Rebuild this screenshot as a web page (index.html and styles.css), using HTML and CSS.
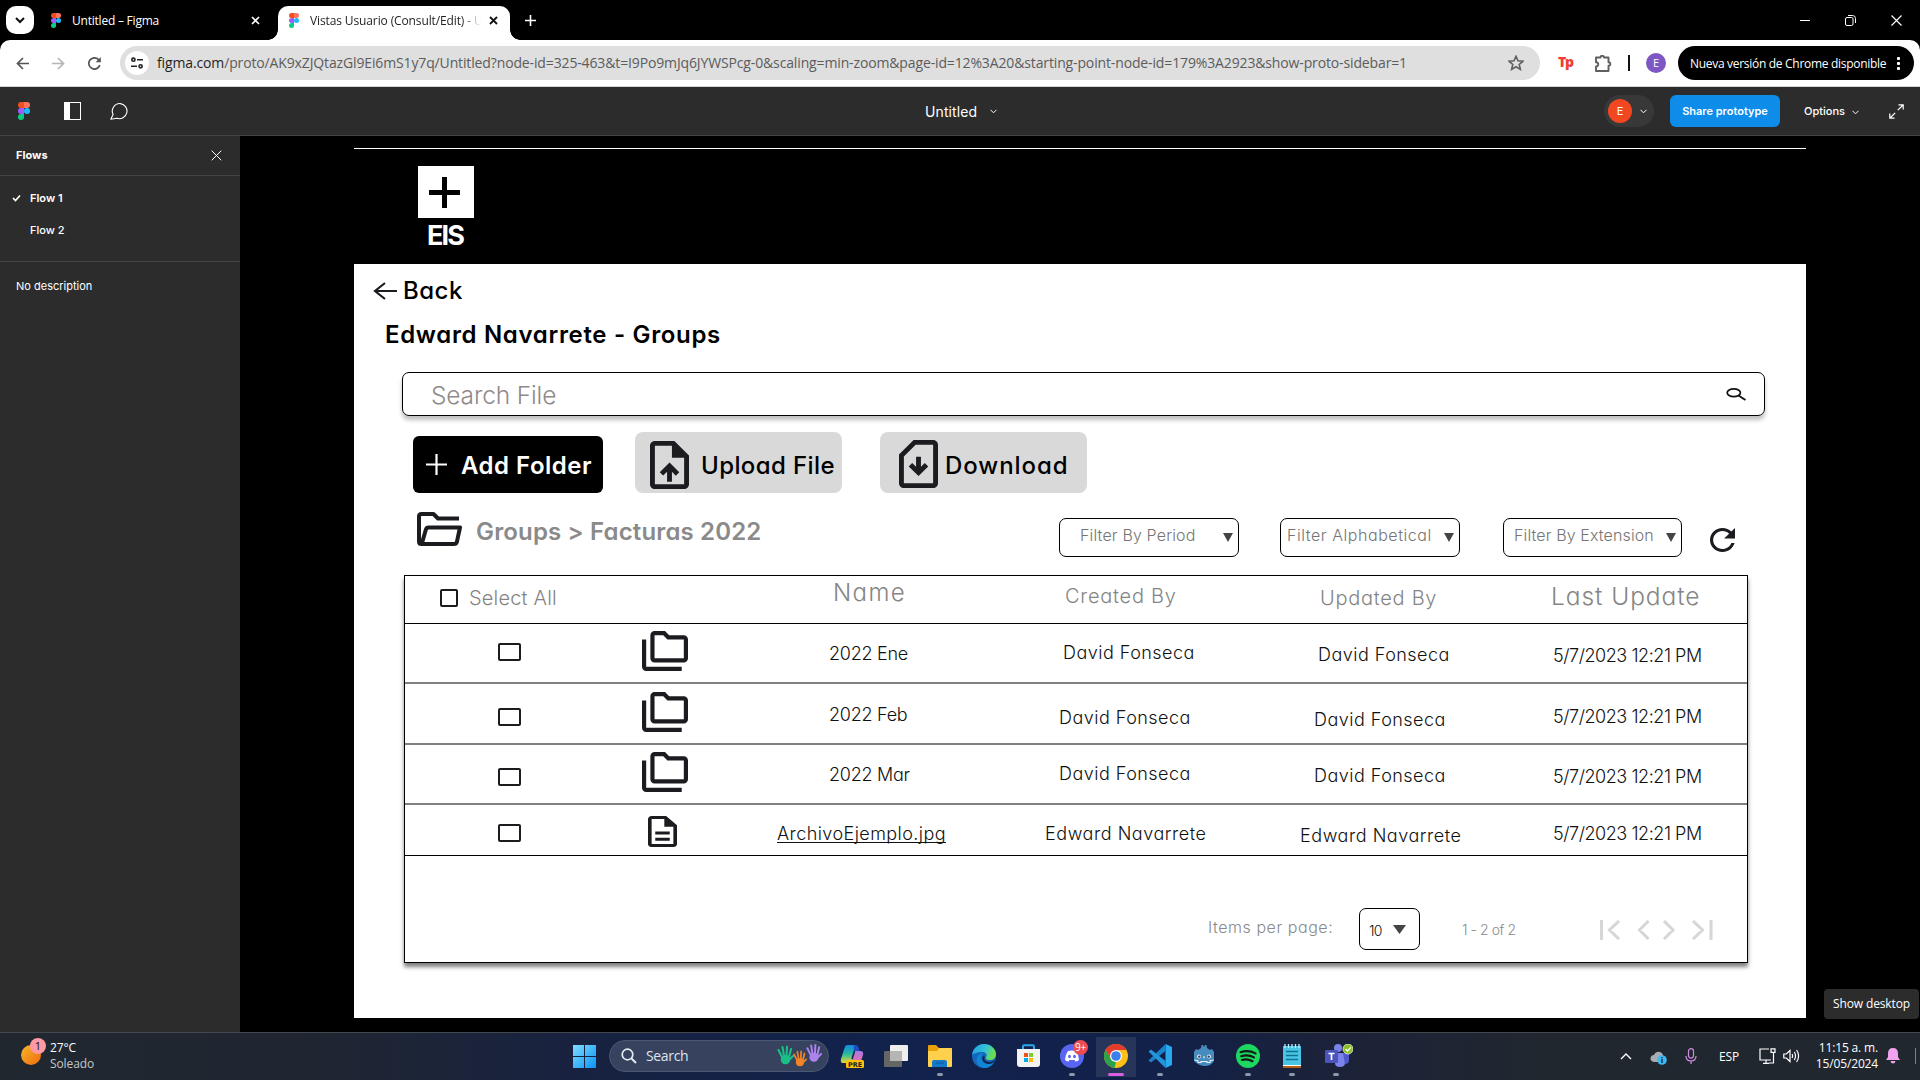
FILE: index.html
```html
<!DOCTYPE html>
<html lang="en">
<head>
<meta charset="utf-8">
<title>Vistas Usuario (Consult/Edit)</title>
<link rel="stylesheet" href="styles.css">
</head>
<body>
<svg class="defs" width="0" height="0" aria-hidden="true">
  <symbol id="figma" viewBox="0 0 20 30" preserveAspectRatio="none">
    <path fill="#f24e1e" d="M5 0h5v10H5A5 5 0 0 1 5 0z"/><path fill="#ff7262" d="M10 0h5a5 5 0 0 1 0 10h-5z"/>
    <path fill="#a259ff" d="M5 10h5v10H5a5 5 0 0 1 0-10z"/><circle fill="#1abcfe" cx="15" cy="15" r="5"/>
    <path fill="#0acf83" d="M5 20h5v5a5 5 0 1 1-5-5z"/>
  </symbol>
  <symbol id="folders" viewBox="1 2 22 19" preserveAspectRatio="none">
    <path d="M3 19h17v2H3c-1.1 0-2-.9-2-2V6h2v13zM23 6v9c0 1.1-.9 2-2 2H7c-1.1 0-2-.9-2-2V4c0-1.1.9-2 2-2h5l2 2h7c1.1 0 2 .9 2 2zM7 15h14V6h-7.83l-2-2H7v11z"/>
  </symbol>
  <symbol id="hand" viewBox="0 0 18 20">
    <g fill="none" stroke="currentColor" stroke-width="2.1" stroke-linecap="round"><path d="M6 12 2.5 5M8 11 6.5 2M10.5 11 11 1.500M13 12l2-8M13 15l4-4"/></g><ellipse cx="9.500" cy="14.500" rx="4.800" ry="4.800" fill="currentColor"/>
  </symbol>
</svg>

<header class="tabs">
  <div class="tab-search"><svg width="10" height="7" viewBox="0 0 10 7"><path d="M1 1l4 4 4-4" fill="none" stroke="#111" stroke-width="2"/></svg></div>
  <div class="tab">
    <svg class="fav" width="10" height="15"><use href="#figma"/></svg>
    <span class="tab-title">Untitled – Figma</span>
    <svg class="tab-x" width="9" height="9" viewBox="0 0 9 9"><path d="M1 1l7 7M8 1 1 8" stroke="#fff" stroke-width="1.600"/></svg>
  </div>
  <div class="tab active">
    <svg class="fav" width="10" height="15"><use href="#figma"/></svg>
    <span class="tab-title">Vistas Usuario (Consult/Edit) - U</span>
    <svg class="tab-x" width="9" height="9" viewBox="0 0 9 9"><path d="M1 1l7 7M8 1 1 8" stroke="#111" stroke-width="1.800"/></svg>
  </div>
  <svg class="new-tab" width="11" height="11" viewBox="0 0 11 11"><path d="M5.500 0v11M0 5.500h11" stroke="#fff" stroke-width="1.600"/></svg>
  <div class="win">
    <svg width="10" height="10" viewBox="0 0 10 10"><path d="M0 5.500h10" stroke="#fff"/></svg>
    <svg width="11" height="11" viewBox="0 0 11 11" fill="none" stroke="#fff"><rect x=".5" y="2.500" width="7.500" height="8" rx="1.500"/><path d="M3 .5h4.500a3 3 0 0 1 3 3V8"/></svg>
    <svg width="11" height="11" viewBox="0 0 11 11"><path d="M.5.5l10 10M10.500.5l-10 10" stroke="#fff" stroke-width="1.200"/></svg>
  </div>
</header>

<div class="toolbar">
  <div class="nav">
    <svg width="13" height="13" viewBox="0 0 13 13"><path d="M13 6.500H1.500M7 1 1.500 6.500 7 12" fill="none" stroke="#555" stroke-width="1.700"/></svg>
    <svg width="13" height="13" viewBox="0 0 13 13"><path d="M0 6.500h11.500M6 1l5.500 5.500L6 12" fill="none" stroke="#b5b5b5" stroke-width="1.700"/></svg>
    <svg width="13" height="13" viewBox="0 0 13 13"><path d="M11.800 8A5.600 5.600 0 1 1 11 3.200L12 4.500" fill="none" stroke="#555" stroke-width="1.700"/><path d="M12.800 0v5.200H7.600z" fill="#555"/></svg>
  </div>
  <div class="omnibox">
    <span class="site"><svg width="12" height="12" viewBox="0 0 12 12" fill="none" stroke="#222" stroke-width="1.600"><circle cx="2.400" cy="2.700" r="1.600"/><path d="M6 2.700h6M0 9.300h6"/><circle cx="9.600" cy="9.300" r="1.600"/></svg></span>
    <span class="url"><b>figma.com</b>/proto/AK9xZJQtazGl9Ei6mS1y7q/Untitled?node-id=325-463&amp;t=I9Po9mJq6JYWSPcg-0&amp;scaling=min-zoom&amp;page-id=12%3A20&amp;starting-point-node-id=179%3A2923&amp;show-proto-sidebar=1</span>
    <svg class="star" width="16" height="16" viewBox="0 0 16 16"><path d="M8 1.300l2 4.500 5 .4-3.800 3.300 1.200 4.900L8 11.800l-4.400 2.600 1.200-4.900L1 6.200l5-.4z" fill="none" stroke="#5f5f5f" stroke-width="1.600"/></svg>
  </div>
  <span class="tp">Tp</span>
  <svg class="puzzle" width="17" height="17" viewBox="0 0 17 17"><path d="M1 2.500h4.500a1.500 1.500 0 0 1 3.500 0h4.500v4.700a1.800 1.800 0 0 1 0 3.600V16H1v-4.500c3 0 3-4.300 0-4.300z" fill="none" stroke="#5f5f5f" stroke-width="1.900" stroke-linejoin="round"/></svg>
  <span class="bar"></span>
  <span class="profile">E</span>
  <span class="update">Nueva versión de Chrome disponible<i class="dots"></i></span>
</div>

<div class="figbar">
  <svg class="figlogo" width="12" height="18"><use href="#figma"/></svg>
  <svg class="side-ic" width="17" height="18" viewBox="0 0 17 18"><path d="M0 0h17v18H0zM6 1v16h10V1z" fill="#fff" fill-rule="evenodd"/></svg>
  <svg class="comment" width="19" height="17" viewBox="0 0 19 17"><path d="M10.500.6a7.600 7.600 0 1 1-3.600 14.700L.8 16.200l2.300-4.600A7.600 7.600 0 0 1 10.500.6z" fill="none" stroke="#fff" stroke-width="1.100" stroke-linejoin="round"/></svg>
  <div class="doc">Untitled<svg width="7" height="5" viewBox="0 0 7 5"><path d="M.5.8l3 3 3-3" fill="none" stroke="#fff"/></svg></div>
  <div class="user"><span>E</span><svg width="7" height="5" viewBox="0 0 7 5"><path d="M.5.8l3 3 3-3" fill="none" stroke="#fff"/></svg></div>
  <div class="share">Share prototype</div>
  <div class="options">Options<svg width="7" height="5" viewBox="0 0 7 5"><path d="M.5.8l3 3 3-3" fill="none" stroke="#fff"/></svg></div>
  <svg class="full" width="15" height="15" viewBox="0 0 15 15" fill="none" stroke="#fff" stroke-width="1.200"><path d="M9.500.8h4.700v4.700M14 1 8.800 6.200M.8 9.500v4.700h4.700M1 14l5.200-5.200"/></svg>
</div>

<main class="stage">
  <aside class="sidebar">
    <div class="flows-head">Flows<svg width="11" height="11" viewBox="0 0 11 11"><path d="M.7.7l9.600 9.600M10.300.7.7 10.300" stroke="#fff"/></svg></div>
    <div class="flows">
      <div class="flow sel"><svg width="9" height="8" viewBox="0 0 9 8"><path d="M1 4l2.500 2.500L8 1.500" fill="none" stroke="#fff" stroke-width="1.700"/></svg>Flow 1</div>
      <div class="flow">Flow 2</div>
    </div>
    <div class="desc">No description</div>
  </aside>
  <section class="frame">
    <div class="brand">
      <div class="brand-box"><svg width="31" height="31" viewBox="0 0 31 31"><path d="M15.500 0v31M0 15.500h31" stroke="#000" stroke-width="5"/></svg></div>
      <div class="brand-name">EIS</div>
    </div>
    <div class="page">
      <div class="back"><svg width="24" height="18" viewBox="0 0 24 18"><path d="M24 9H2M12 1 2 9l10 8" fill="none" stroke="#1c1b1f" stroke-width="2.200"/></svg><span>Back</span></div>
      <h1 class="title">Edward Navarrete - Groups</h1>
      <div class="search"><span>Search File</span><svg width="21" height="13" viewBox="0 0 21 13"><ellipse cx="7.800" cy="4.800" rx="6.600" ry="3.900" fill="none" stroke="#111" stroke-width="1.700"/><path d="M12.500 7.500l7 4.500" stroke="#111" stroke-width="1.900"/></svg></div>
      <div class="actions">
        <div class="btn add"><svg width="21" height="21" viewBox="0 0 21 21"><path d="M10.500 0v21M0 10.500h21" stroke="#fff" stroke-width="2.200"/></svg><span>Add Folder</span></div>
        <div class="btn upload"><svg width="39" height="48" viewBox="4 2 16 20" preserveAspectRatio="none" fill="#1c1b1f"><path d="M14 2H6c-1.100 0-2 .9-2 2v16c0 1.100.9 2 2 2h12c1.100 0 2-.9 2-2V8l-6-6zm4 18H6V4h7v5h5v11z"/><path d="M8 15.010l1.410 1.410L11 14.840V19h2v-4.160l1.590 1.590L16 15.010 12.010 11z"/></svg><span>Upload File</span></div>
        <div class="btn download"><svg width="39" height="48" viewBox="4 2 16 20" preserveAspectRatio="none" fill="#1c1b1f"><path d="M18 2h-8L4 8v12c0 1.100.9 2 2 2h12c1.100 0 2-.9 2-2V4c0-1.100-.9-2-2-2zm0 18H6V8.830L10.830 4H18v16z"/><path d="M12 17l-4-4 1.410-1.410L11 13.170V9h2v4.170l1.590-1.590L16 13z"/></svg><span>Download</span></div>
      </div>
      <div class="crumbs">
        <svg class="open" width="45" height="34" viewBox="0 0 45 34"><path d="M42 6.500H21l-4.500-4.500H4.500Q2 2 2 4.500v25Q2 32 4.500 32H37q2.200 0 2.900-2.200L43 15.500H11.500q-2 0-2.600 2L5 31" fill="none" stroke="#1c1b1f" stroke-width="4" stroke-linejoin="round"/></svg>
        <span class="path">Groups &gt; Facturas 2022</span>
        <div class="filter period"><span>Filter By Period</span><i class="arrow"></i></div>
        <div class="filter alpha"><span>Filter Alphabetical</span><i class="arrow"></i></div>
        <div class="filter ext"><span>Filter By Extension</span><i class="arrow"></i></div>
        <svg class="refresh" width="25" height="24" viewBox="4 4 16 16" preserveAspectRatio="none"><path fill="#1c1b1f" d="M17.650 6.350C16.200 4.900 14.210 4 12 4c-4.420 0-7.990 3.580-7.990 8s3.570 8 7.990 8c3.730 0 6.840-2.550 7.730-6h-2.080c-.82 2.330-3.040 4-5.650 4-3.310 0-6-2.690-6-6s2.690-6 6-6c1.660 0 3.140.69 4.220 1.780L13 11h7V4l-2.350 2.350z"/></svg>
      </div>
      <div class="table">
        <div class="row head">
          <div class="all"><i class="box"></i><span>Select All</span></div>
          <div class="name">Name</div><div class="created">Created By</div><div class="updated">Updated By</div><div class="date">Last Update</div>
        </div>
        <div class="row r1"><div class="check"><i class="box"></i></div><div class="icon"><svg width="46" height="40"><use href="#folders"/></svg></div><div class="name">2022 Ene</div><div class="created">David Fonseca</div><div class="updated">David Fonseca</div><div class="date">5/7/2023 12:21 PM</div></div>
        <div class="row r2"><div class="check"><i class="box"></i></div><div class="icon"><svg width="46" height="40"><use href="#folders"/></svg></div><div class="name">2022 Feb</div><div class="created">David Fonseca</div><div class="updated">David Fonseca</div><div class="date">5/7/2023 12:21 PM</div></div>
        <div class="row r3"><div class="check"><i class="box"></i></div><div class="icon"><svg width="46" height="40"><use href="#folders"/></svg></div><div class="name">2022 Mar</div><div class="created">David Fonseca</div><div class="updated">David Fonseca</div><div class="date">5/7/2023 12:21 PM</div></div>
        <div class="row r4"><div class="check"><i class="box"></i></div><div class="icon"><svg width="29" height="31" viewBox="4 2 16 20" preserveAspectRatio="none"><path d="M8 16h8v2H8zm0-4h8v2H8zm6-10H6c-1.100 0-2 .9-2 2v16c0 1.100.89 2 1.990 2H18c1.100 0 2-.9 2-2V8l-6-6zm4 18H6V4h7v5h5v11z"/></svg></div><div class="name"><u>ArchivoEjemplo.jpg</u></div><div class="created">Edward Navarrete</div><div class="updated">Edward Navarrete</div><div class="date">5/7/2023 12:21 PM</div></div>
        <div class="pager">
          <span class="per">Items per page:</span>
          <div class="count"><span>10</span><i class="arrow big"></i></div>
          <span class="range">1 - 2 of 2</span>
          <svg width="113" height="20" viewBox="0 0 113 20" fill="none" stroke="#d6d6d6" stroke-width="3"><path d="M1.500 0v20M19 1l-9.500 9L19 19M48.500 1 39.500 10l9 9M64 1l9 9-9 9M93 1l9.500 9L93 19M111 0v20"/></svg>
        </div>
      </div>
    </div>
  </section>
  <div class="tooltip">Show desktop</div>
</main>

<footer class="taskbar">
  <div class="weather">
    <div class="sun"><i>1</i></div>
    <div class="w-text"><b>27°C</b><span>Soleado</span></div>
  </div>
  <div class="center">
    <svg class="start" width="23" height="23" viewBox="0 0 23 23"><defs><linearGradient id="wg" x1="0" y1="0" x2="1" y2="1"><stop offset="0" stop-color="#7fdcff"/><stop offset="1" stop-color="#0a94f5"/></linearGradient></defs><path fill="url(#wg)" d="M0 0h11v11H0zM12 0h11v11H12zM0 12h11v11H0zM12 12h11v11H12z"/></svg>
    <div class="pill">
      <svg width="16" height="16" viewBox="0 0 16 16"><circle cx="6.500" cy="6.500" r="5.300" fill="none" stroke="#e6eaf2" stroke-width="1.700"/><path d="M10.500 10.500l4.500 4.500" stroke="#e6eaf2" stroke-width="1.900"/></svg>
      <span>Search</span>
      <div class="hands"><svg class="h1" width="18" height="20"><use href="#hand"/></svg><svg class="h2" width="15" height="17" viewBox="0 0 15 17"><use href="#hand" width="15" height="17"/></svg><svg class="h3" width="17" height="20" viewBox="0 0 17 20"><use href="#hand" width="17" height="20"/></svg></div>
    </div>
    <div class="app"><svg width="24" height="24" viewBox="0 0 24 24"><defs><linearGradient id="cg" x1="0" y1="0" x2="0" y2="1"><stop offset="0" stop-color="#1389e0"/><stop offset=".5" stop-color="#28b9a0"/><stop offset="1" stop-color="#e6dc32"/></linearGradient><linearGradient id="ch" x1="0" y1="0" x2="0" y2="1"><stop offset="0" stop-color="#a47be8"/><stop offset="1" stop-color="#f26aa0"/></linearGradient></defs><path d="M7 1h8q2 0 1.400 2L12 16q-1 3-4 3H3q-3 0-2-4L4.500 4Q5.300 1 7 1z" fill="url(#cg)"/><path d="M14 1h2q2 0 2.600 3l1 3h-6z" fill="#1d4cc4"/><path d="M15 7h5q4 0 3 4l-2 6q-.6 2-3 2h-7z" fill="url(#ch)"/><path d="M14.500 7 12 15" stroke="#142247" stroke-width="1.500"/><rect x="6" y="16" width="18" height="8" rx="1.500" fill="#fdc30c"/><text x="15" y="22.500" text-anchor="middle" class="pre">PRE</text></svg></div>
    <div class="app"><svg width="24" height="22" viewBox="0 0 24 22"><rect x="6" width="18" height="16" rx="1" fill="#eee"/><path d="M1 6h17v15a1 1 0 0 1-1 1H1a1 1 0 0 1-1-1V7z" fill="#666"/><path d="M6 6h12v10H6z" fill="#b5b5b5"/></svg></div>
    <div class="app run"><svg width="24" height="22" viewBox="0 0 24 22"><path d="M0 1q0-1 1-1h7l3 3h12q1 0 1 1v5H0z" fill="#e8a00b"/><path d="M0 6h9l2-3h12q1 0 1 1v17q0 1-1 1H1q-1 0-1-1z" fill="#ffd04c"/><path d="M4 22v-5q0-2 2-2h11q2 0 2 2v5z" fill="#1479c9"/><path d="M8 18h8" stroke="#0c5ba0" stroke-width="1.200"/></svg></div>
    <div class="app"><svg width="24" height="24" viewBox="0 0 24 24"><defs><linearGradient id="eg" x1="0" y1="0" x2="1" y2=".3"><stop offset="0" stop-color="#1b9de2"/><stop offset=".6" stop-color="#35c1d8"/><stop offset="1" stop-color="#6bdc4f"/></linearGradient></defs><circle cx="12" cy="12" r="12" fill="#1566bd"/><path d="M0 11C1 4 6 0 12 0c7 0 12 5 12 10 0 4-3 6-6 6-4 0-5-2-4-3 2-3-1-5-4-5-5 0-9 2-10 3z" fill="url(#eg)"/><path d="M9 13c0 5 4 7 8 7 2 0 4-1 5-2-2 4-6 6-10 6-6-1-8-6-7-10 1-3 3-5 6-5-1 1-2 2-2 4z" fill="#1185d6"/><path d="M13 13c-2 3 1 5 5 5 2 0 4-1 5.400-2.200-.8 2.200-3.400 4.200-6.400 4.200-5 0-8-4-6-8z" fill="#142247"/></svg></div>
    <div class="app"><svg width="23" height="24" viewBox="0 0 23 24"><path d="M6 6V2.500Q6 1.200 7.300 1.200h8.400Q17 1.200 17 2.500V6" fill="none" stroke="#27a9ee" stroke-width="2"/><path d="M0 5h23v15q0 3-3 3H3q-3 0-3-3z" fill="#f3f3f3"/><path fill="#f1511b" d="M7 9h4v4H7z"/><path fill="#80cc28" d="M12 9h4v4h-4z"/><path fill="#00adef" d="M7 14h4v4H7z"/><path fill="#fbbc09" d="M12 14h4v4h-4z"/></svg></div>
    <div class="app run"><svg width="24" height="24" viewBox="0 0 24 24"><circle cx="12" cy="12" r="12" fill="#5865f2"/><path d="M8 7q4-1 8 0 3 4 3 9-2 1.500-3.500 1.500L14.500 16h-5l-1 1.500Q7 17.500 5 16q0-5 3-9z" fill="#fff"/><ellipse cx="9.500" cy="12.500" rx="1.400" ry="1.700" fill="#5865f2"/><ellipse cx="14.500" cy="12.500" rx="1.400" ry="1.700" fill="#5865f2"/></svg><span class="badge">9+</span></div>
    <div class="app run current"><svg width="24" height="24" viewBox="0 0 24 24"><circle cx="12" cy="12" r="12" fill="#fbc116"/><path d="M1.600 6a12 12 0 0 1 20.800 0H12L7 15z" fill="#e33b2e"/><path d="M1.600 6 7 15l5 3-1.500 5.900A12 12 0 0 1 1.600 6z" fill="#2ba24c"/><circle cx="12" cy="12" r="6" fill="#fff"/><circle cx="12" cy="12" r="4.800" fill="#3b7fec"/></svg></div>
    <div class="app run"><svg width="24" height="24" viewBox="0 0 24 24"><path d="M17.500 0 24 3v18l-6.500 3z" fill="#29a9f0"/><path d="M17.500 0v7L3 18.500l-2.500-2z" fill="#1b82c9"/><path d="M17.500 24v-7L3 5.500l-2.500 2z" fill="#2395dc"/></svg></div>
    <div class="app"><svg width="22" height="22" viewBox="0 0 22 22"><path d="M1 7l2-3 2 1 3-2 .5-3h1.500l1 2 1-2h1.500l.5 3 3 2 2-1 2 3v9q-3 5-9 5T1 16z" fill="#478cbf"/><circle cx="6" cy="11.500" r="2" fill="#e8f0f6"/><circle cx="16" cy="11.500" r="2" fill="#e8f0f6"/><circle cx="6.200" cy="11.600" r="1.200" fill="#414042"/><circle cx="15.800" cy="11.600" r="1.200" fill="#414042"/><path d="M11 11v2.500M1.500 15l3.500.8v1.700h3v-1h6v1h3v-1.700l3.500-.8" stroke="#e8f0f6" stroke-width="1.100" fill="none"/></svg></div>
    <div class="app run"><svg width="24" height="24" viewBox="0 0 24 24"><circle cx="12" cy="12" r="12" fill="#1ed760"/><path d="M4.500 8.200q8-2.500 15 1.200M5.200 12.200q7-2 12.800 1.200M6 16q5.500-1.500 10.500 1.200" fill="none" stroke="#101c14" stroke-width="2.200" stroke-linecap="round"/></svg></div>
    <div class="app run"><svg width="18" height="24" viewBox="0 0 18 24"><path d="M0 2h18v19H0z" fill="#48c4e4"/><path d="M0 21h18v1H0z" fill="#fff"/><path d="M0 22h18v2H0z" fill="#b4601b"/><path d="M2 0v4M5.500 0v4M9 0v4M12.500 0v4M16 0v4" stroke="#bfeefa" stroke-width="1.300"/><path d="M3 7.500h12M3 11.500h12M3 15.500h12" stroke="#10728f" stroke-width="1.500"/></svg></div>
    <div class="app run teams"><svg width="28" height="24" viewBox="0 0 28 24"><circle cx="13" cy="4" r="4" fill="#7b83eb"/><path d="M10 9h10v10q0 4-5 4t-5-4z" fill="#7b83eb"/><path d="M18 9h6v7q0 4-4 4z" fill="#5059c9"/><rect y="6" width="13" height="13" rx="1" fill="#4b53bc"/><path d="M3.500 9.500h6M6.500 9.500V16" stroke="#fff" stroke-width="1.700"/><circle cx="23" cy="5" r="5" fill="#8ac025" stroke="#e9f3d8" stroke-width=".8"/><path d="M20.500 5l2 2 3.300-3.600" fill="none" stroke="#fff" stroke-width="1.400"/></svg></div>
  </div>
  <div class="tray">
    <svg class="t-up" width="12" height="7" viewBox="0 0 12 7"><path d="M1 6l5-5 5 5" fill="none" stroke="#fff" stroke-width="1.400"/></svg>
    <svg class="t-cloud" width="17" height="14" viewBox="0 0 17 14"><path d="M4 11q-4-1-3.500-4T4 4q2-4 6-3 3 1 3 4v6z" fill="#a9adb1"/><circle cx="12" cy="9" r="4.800" fill="#3db8f5"/><path d="M12 8v4M12 6v1.200" stroke="#14212c" stroke-width="1.300"/></svg>
    <svg class="t-mic" width="12" height="16" viewBox="0 0 12 16" fill="none" stroke="#d58be0" stroke-width="1.200"><rect x="3.500" y=".6" width="5" height="9.500" rx="2.500"/><path d="M1 8q0 5 5 5t5-5M6 13v3"/></svg>
    <span class="t-lang">ESP</span>
    <svg class="t-net" width="17" height="16" viewBox="0 0 17 16" fill="none" stroke="#fff" stroke-width="1.200"><path d="M10 1H1v11h11M4 15.300h6M7 12v3M14.500 6v9H10M12 .8h4v3.500h-4zM14.500 4v3"/></svg>
    <svg class="t-vol" width="17" height="14" viewBox="0 0 17 14" fill="none" stroke="#fff" stroke-width="1.200"><path d="M.8 5h2.500L7 1.500v11L3.300 9H.8zM9 5q1.300 2 0 4M11.300 3q2.500 4 0 8M13.600 1q4 6 0 12"/></svg>
    <div class="clock"><span>11:15 a. m.</span><span>15/05/2024</span></div>
    <svg class="t-bell" width="14" height="16" viewBox="0 0 14 16"><path d="M7 0q5 0 5 5.500V9l2 3H0l2-3V5.500Q2 0 7 0zM4.500 13h5q-.5 2.500-2.500 2.500T4.500 13z" fill="#f0a3ec"/></svg>
    <i class="edge"></i>
  </div>
</footer>
</body>
</html>
```
FILE: styles.css
```css
* { box-sizing: border-box; }
body { margin: 0; width: 1920px; height: 1080px; overflow: hidden; background: #000; font-family: Inter, "Liberation Sans", sans-serif; white-space: nowrap; }
svg { display: block; flex: none; }
.defs { position: absolute; }
i { font-style: normal; }

/* Browser tabs */
.tabs { display: flex; height: 40px; padding: 6px 0 0 6px; font: 12px/28px "Open Sans", sans-serif; }
.tab-search { width: 28px; height: 28px; border-radius: 10px; background: #fff; display: flex; align-items: center; justify-content: center; }
.tab { display: flex; width: 232px; height: 34px; align-items: center; padding-bottom: 5px; margin-left: 12px; }
.tab:not(.active) { padding-left: 5px; width: 220px; color: #fff; }
.fav { margin-right: 11px; }
.tab:not(.active) .tab-title { letter-spacing: -.22px; width: 179px; }
.tab-title { flex: none; padding-top: 1px; }
.tab.active { background: #fff; border-radius: 10px 10px 0 0; padding-left: 11px; color: #1f1f1f; position: relative; }
.tab.active::before, .tab.active::after { content: ""; position: absolute; bottom: 0; width: 10px; height: 10px; }
.tab.active::before { left: -10px; background: radial-gradient(circle at 0 0, transparent 9.5px, #fff 10px); }
.tab.active::after { right: -10px; background: radial-gradient(circle at 100% 0, transparent 9.5px, #fff 10px); }
.active .tab-title { width: 172px; margin-right: 7px; letter-spacing: -.12px; -webkit-mask-image: linear-gradient(90deg, #000 152px, transparent 171px); mask-image: linear-gradient(90deg, #000 152px, transparent 171px); }
.new-tab { margin: 9px 0 0 15px; }
.win { display: flex; gap: 35px; margin-left: auto; padding: 9px 18px 0 0; }

/* Address bar */
.toolbar { display: flex; align-items: center; height: 47px; background: #fff; border-bottom: 1px solid #d5d5d5; border-radius: 10px 10px 0 0; padding: 0 6px 0 16px; }
.nav { display: flex; gap: 23px; width: 104px; }
.omnibox { display: flex; align-items: center; width: 1420px; height: 34px; border-radius: 17px; background: #dfdfdf; padding-left: 5px; }
.site { width: 24px; height: 24px; border-radius: 50%; background: #fff; display: flex; align-items: center; justify-content: center; }
.url { font: 14px/20px "Open Sans", sans-serif; letter-spacing: -.136px; color: #5c5c5c; margin-left: 8px; width: 1351px; }
.url b { font-weight: 400; color: #1f1f1f; }
.tp { font: 800 14px/18px "Open Sans", sans-serif; letter-spacing: -1.3px; color: #f23c37; margin: -2px 0 0 18px; width: 37px; }
.puzzle { margin-right: 16px; }
.bar { width: 2px; height: 16px; background: #111; }
.profile { width: 20px; height: 20px; border-radius: 50%; background: #7e57c2; color: #fff; font: 11px/20px "Open Sans", sans-serif; text-align: center; margin: 0 12px 0 16px; }
.update { display: flex; justify-content: space-between; align-items: center; flex: 1; height: 34px; border-radius: 17px; background: #000; color: #fff; font: 500 12px "Open Sans", sans-serif; letter-spacing: -.3px; padding: 0 14px 0 12px; }
.dots { width: 3px; height: 15px; background: radial-gradient(circle, #fff 1.3px, transparent 1.8px) 0 0 / 3px 5px; }

/* Prototype bar */
.figbar { display: flex; align-items: center; height: 49px; background: #2c2c2c; border-bottom: 1px solid #444; color: #fff; padding-left: 18px; font-size: 11px; }
.side-ic { margin: 0 29px 0 34px; }
.doc { display: flex; align-items: center; font-size: 14px; letter-spacing: .1px; margin-left: 796px; width: 679px; }
.doc svg { margin-left: 13px; }
.user { display: flex; align-items: center; width: 50px; height: 32px; border-radius: 16px; background: #383838; padding-left: 4px; }
.user span { width: 24px; height: 24px; border-radius: 50%; background: #f24822; text-align: center; line-height: 24px; margin-right: 8px; }
.share { width: 110px; height: 32px; border-radius: 6px; background: #0d8ce9; font-weight: 600; line-height: 32px; text-align: center; margin: 0 24px 0 16px; }
.options { display: flex; align-items: center; font-weight: 500; width: 85px; }
.options svg { margin: 2px 0 0 7px; }

/* Stage */
.stage { display: flex; position: relative; height: 896px; }
.sidebar { width: 240px; background: #2c2c2c; color: #fff; font-size: 11px; }
.flows-head { display: flex; justify-content: space-between; align-items: center; height: 40px; border-bottom: 1px solid #444; padding: 0 18px 1px 16px; font-weight: 700; }
.flows { height: 86px; border-bottom: 1px solid #444; padding-top: 6px; }
.flow { display: flex; align-items: center; height: 32px; padding-left: 30px; font-weight: 500; }
.flow.sel { padding-left: 12px; font-weight: 600; }
.flow svg { margin-right: 9px; }
.desc { padding: 16px; line-height: 17px; }
.frame { width: 1452px; margin: 12px 0 0 114px; font-feature-settings: "cv11"; }
.brand { height: 116px; border-top: 1px solid #fff; background: #000; padding: 17px 0 0 64px; }
.brand-box { width: 56px; height: 52px; background: #fff; padding: 11px 0 0 11px; }
.brand-name { font-weight: 700; font-size: 27px; line-height: 20px; letter-spacing: -1.9px; color: #fff; margin-top: 8px; padding-left: 9px; }
.page { height: 754px; background: #fff; padding-top: 10px; }
.back { display: flex; align-items: center; height: 34px; padding-left: 19px; font-weight: 500; font-size: 24px; letter-spacing: .5px; }
.back span { padding: 0 0 2px 6px; }
.title { margin: 11px 0 0 31px; height: 31px; font-size: 24px; font-weight: 600; line-height: 31px; letter-spacing: .67px; }
.search { display: flex; align-items: center; justify-content: space-between; width: 1363px; height: 44px; margin: 22px 0 0 48px; border: 1px solid #000; border-radius: 7px; box-shadow: 0 4px 4px rgba(0,0,0,.25); padding: 0 17px 0 28px; }
.search span { font-weight: 300; font-size: 24.5px; letter-spacing: -.15px; color: #8f8a8a; padding-top: 2px; font-feature-settings: normal; }
.actions { display: flex; align-items: flex-end; height: 61px; margin: 16px 0 0 59px; }
.btn { display: flex; height: 61px; border-radius: 8px; background: #d9d9d9; font-weight: 500; font-size: 24px; line-height: 30px; }
.btn span { padding-top: 19px; }
.add { width: 190px; height: 57px; border-radius: 6px; background: #000; color: #fff; font-weight: 600; letter-spacing: .5px; }
.add svg { margin: 18px 14px 0 13px; }
.add span { padding-top: 15px; }
.upload { width: 207px; margin: 0 38px 0 32px; letter-spacing: .4px; }
.upload svg { margin: 9px 12px 0 15px; }
.download { width: 207px; letter-spacing: .95px; }
.download svg { margin: 8px 7px 0 19px; }
.crumbs { display: flex; height: 82px; align-items: flex-start; padding-left: 63px; }
.open { margin-top: 19px; }
.path { font-size: 24px; font-weight: 600; line-height: 30px; letter-spacing: .15px; color: #8a8a8a; margin: 24px 0 0 14px; width: 583px; }
.filter { display: flex; width: 180px; height: 39px; margin-top: 25px; border: 1px solid #000; border-radius: 7px; justify-content: space-between; font-weight: 300; font-size: 16px; line-height: 20px; color: #757575; }
.filter span { padding-top: 6px; }
.period { padding: 0 5px 0 20px; letter-spacing: .15px; }
.alpha { margin-left: 41px; padding: 0 5px 0 6px; letter-spacing: .55px; }
.ext { width: 179px; margin-left: 43px; padding: 0 5px 0 10px; letter-spacing: .12px; }
.arrow { width: 10px; height: 9px; margin-top: 14px; background: #444; clip-path: polygon(0 0, 100% 0, 50% 100%); }
.refresh { margin: 35px 0 0 28px; }

/* File table */
.table { width: 1344px; height: 388px; margin-left: 50px; border: 1px solid #000; box-shadow: 0 4px 4px rgba(0,0,0,.5); font-weight: 300; }
.row { display: grid; grid-template-columns: 155px 180px 240px 270px 250px 1fr; font-size: 18px; line-height: 20px; color: #111; }
.r1, .r2, .r3 { border-bottom: 2px solid #808080; }
.r1 { height: 60px; } .r2 { height: 61px; } .r3 { height: 60px; }
.r4 { height: 52px; border-bottom: 1px solid #000; }
.box { display: block; width: 23px; height: 18px; border: 2px solid #1c1b1f; border-radius: 2px; }
.check { padding: 19px 0 0 93px; }
.icon { padding: 7px 0 0 82px; fill: #1c1b1f; }
.name { padding: 20px 0 0 89px; letter-spacing: -.26px; }
.created { padding: 19px 0 0 83px; letter-spacing: .48px; }
.updated { padding: 21px 0 0 68px; letter-spacing: .48px; }
.date { padding: 22px 0 0 53px; letter-spacing: -.45px; }
.r2 .check { padding-top: 24px; }
.r2 .icon { padding-top: 8px; }
.r2 .name { padding-top: 21px; }
.r2 .created { padding: 24px 0 0 79px; }
.r2 .updated { padding: 26px 0 0 64px; }
.r2 .date { padding-top: 23px; }
.r3 .check { padding-top: 23px; }
.r3 .created { padding: 19px 0 0 79px; }
.r3 .updated { padding: 21px 0 0 64px; }
.r4 { height: 51px; }
.r4 .check { padding-top: 19px; }
.r4 .icon { padding: 11px 0 0 88px; }
.r4 .name { padding: 19px 0 0 37px; letter-spacing: .43px; }
.r4 .name u { text-decoration-thickness: 1px; text-underline-offset: 2px; text-decoration-skip-ink: none; }
.r4 .created { padding: 19px 0 0 65px; letter-spacing: .55px; }
.r4 .updated { padding: 21px 0 0 50px; letter-spacing: .55px; }
.r4 .date { padding-top: 19px; }
.head { height: 48px; border-bottom: 1px solid #000; color: #858585; }
.head .all { display: flex; grid-column: span 2; padding: 13px 0 0 35px; font-size: 20px; letter-spacing: .19px; }
.all .box { width: 18px; margin-right: 11px; }
.all span { margin-top: -1px; }
.head .name { padding: 7px 0 0 93px; font-size: 24px; letter-spacing: 1.4px; }
.head .created { padding: 10px 0 0 85px; font-size: 20px; letter-spacing: .75px; }
.head .updated { padding: 12px 0 0 70px; font-size: 20px; letter-spacing: .72px; }
.head .date { padding: 10px 0 0 51px; font-size: 24.5px; letter-spacing: .95px; }
.pager { display: flex; align-items: flex-start; padding: 52px 0 0 803px; color: #8a8a8a; line-height: 20px; }
.per { font-size: 16px; letter-spacing: .55px; width: 151px; padding-top: 9px; }
.count { display: flex; width: 61px; height: 42px; border: 1px solid #000; border-radius: 7px; padding: 16px 0 0 9px; color: #111; font-size: 14px; letter-spacing: -.7px; }
.count span { width: 24px; margin-top: -4px; }
.arrow.big { width: 13px; height: 9px; margin: 0; }
.range { font-size: 14px; letter-spacing: -.43px; margin-left: 42px; width: 138px; padding-top: 12px; }
.pager svg { margin-top: 12px; }
.tooltip { position: absolute; left: 1824px; top: 853px; width: 95px; height: 30px; border-radius: 4px; background: #2c2c2c; color: #fff; font: 12px/30px "Open Sans", sans-serif; letter-spacing: -.12px; text-align: center; }

/* Windows taskbar */
.taskbar { display: flex; height: 48px; border-top: 1px solid #43474e; background: linear-gradient(90deg, #20272f 0, #1f2631 16%, #182240 30%, #11224c 46%, #12214a 60%, #1b2239 69%, #20272f 80%); color: #fff; font: 12px/16px "Open Sans", sans-serif; }
.weather { display: flex; width: 573px; padding-left: 21px; }
.sun { position: relative; width: 20px; height: 20px; margin: 12px 9px 0 0; border-radius: 50%; background: linear-gradient(135deg, #f5b82e, #f06a0c); }
.sun i { position: absolute; left: 9px; top: -17px; width: 16px; height: 16px; margin-top: 10px; border-radius: 50%; background: #ff99a4; color: #111; text-align: center; font-size: 11px; }
.w-text { display: flex; flex-direction: column; padding-top: 7px; letter-spacing: -.1px; }
.w-text b { font-weight: 400; }
.w-text span { color: #c4c7ca; }
.center { display: flex; align-items: center; width: 1047px; padding-bottom: 1px; }
.pill { display: flex; align-items: center; width: 220px; height: 32px; margin: 0 1px 0 13px; border: 1px solid #4b5774; border-radius: 16px; background: #37425f; padding-left: 11px; font-size: 14px; color: #dfe3ea; letter-spacing: -.35px; }
.pill span { width: 139px; padding-left: 9px; }
.hands { display: flex; align-items: center; }
.h1 { color: #18bf86; margin: -3px -2px 0 0; } .h2 { color: #ef8526; margin-top: 4px; } .h3 { color: #ab83ec; margin: -6px 0 0 -2px; }
.pre { font: 700 6.5px "DejaVu Sans", sans-serif; fill: #222; }
.app { position: relative; display: flex; align-items: center; justify-content: center; width: 44px; height: 47px; }
.run::after { content: ""; position: absolute; bottom: 4px; left: 19px; width: 6px; height: 3px; border-radius: 2px; background: #8f98aa; }
.teams svg { margin-left: 5px; }
.current { background: linear-gradient(#27355b, #27355b) 2px 4px / 40px 40px no-repeat; }
.current::after { left: 14px; width: 16px; background: #d95fe0; }
.badge { position: absolute; right: 6px; top: 7px; width: 15px; height: 15px; border-radius: 50%; background: #ee4b50; font-size: 10px; line-height: 14px; text-align: center; letter-spacing: -.3px; }
.tray { display: flex; align-items: center; flex: 1; padding-bottom: 1px; }
.t-up { margin-right: 18px; } .t-cloud { margin: 3px 18px 0 0; }
.t-lang { margin: 1px 20px 0 22px; letter-spacing: -.15px; }
.t-vol { margin-left: 7px; }
.clock { display: flex; flex-direction: column; align-items: flex-end; width: 78px; letter-spacing: -.15px; margin-right: 8px; }
.edge { width: 1px; height: 16px; margin-left: 15px; background: #7d8288; }
```
